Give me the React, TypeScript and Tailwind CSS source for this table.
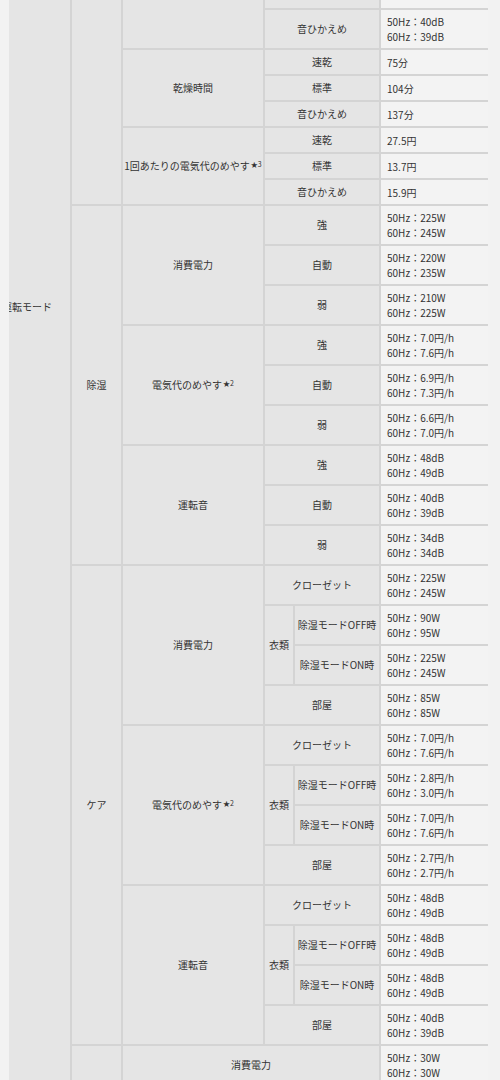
import React, { FC, ReactNode } from "react";
import clsx from "clsx";

const labelCls =
  "flex items-center justify-center bg-[#e5e5e5] text-center text-[10px] leading-[14px] text-[#333]";
const valueCls =
  "flex flex-col justify-center bg-[#f3f3f3] pl-[6px] text-[10px] leading-[15px] text-[#333]";

interface LeafRowProps {
  label?: string;
  lines?: string[];
  tall?: boolean;
  narrow?: boolean;
  partial?: boolean;
}

// one label + one value, the smallest row of the spec table
const LeafRow: FC<LeafRowProps> = ({ label, lines = [], tall, narrow, partial }) => {
  return (
    <div
      className={clsx(
        "flex gap-[2px]",
        partial ? "h-[8px]" : tall ? "h-[38px]" : "h-[24px]"
      )}
    >
      <div className={clsx(labelCls, narrow ? "w-[84px]" : "w-[114px]")}>{label}</div>
      <div className={clsx(valueCls, "w-[107px]")}>
        {lines.map((line) => (
          <span key={line}>{line}</span>
        ))}
      </div>
    </div>
  );
};

interface GroupProps {
  title?: ReactNode;
  width: "b" | "c" | "d";
  children: ReactNode;
}

const Group: FC<GroupProps> = ({ title, width, children }) => {
  return (
    <div className="flex gap-[2px]">
      <div
        className={clsx(
          labelCls,
          width === "b" && "w-[49px]",
          width === "c" && "w-[140px]",
          width === "d" && "w-[28px]"
        )}
      >
        {title}
      </div>
      <div className="flex flex-col gap-[2px]">{children}</div>
    </div>
  );
};

const Star: FC<{ n: string }> = ({ n }) => (
  <sup className="ml-[1px] text-[7px] leading-none">★{n}</sup>
);

const hz = (a: string, b: string) => [`50Hz：${a}`, `60Hz：${b}`];

interface CareProps {
  title: ReactNode;
  closet: string[];
  off: string[];
  on: string[];
  room: string[];
}

const CareBlock: FC<CareProps> = ({ title, closet, off, on, room }) => (
  <Group title={title} width="c">
    <LeafRow label="クローゼット" lines={closet} tall />
    <Group title="衣類" width="d">
      <LeafRow label="除湿モードOFF時" lines={off} tall narrow />
      <LeafRow label="除湿モードON時" lines={on} tall narrow />
    </Group>
    <LeafRow label="部屋" lines={room} tall />
  </Group>
);

const App: FC = () => {
  return (
    <div
      className="w-[500px] h-[1080px] overflow-hidden bg-[#f2f2f2] pl-[9px]"
      style={{ fontFamily: '"Noto Sans CJK JP", "Noto Sans", sans-serif' }}
    >
      <div className="flex w-[479px] gap-[2px] bg-[#d4d4d4]">
        {/* 運転モード column, scrolled partly out of view */}
        <div className="w-[61px] shrink-0 overflow-hidden bg-[#e5e5e5] pt-[300px]">
          <div className="ml-[-7px] whitespace-nowrap text-[10px] leading-[14px] text-[#333]">
            運転モード
          </div>
        </div>

        <div className="flex flex-col gap-[2px]">
          {/* 乾燥 */}
          <Group width="b">
            <Group width="c">
              <LeafRow partial />
              <LeafRow label="音ひかえめ" lines={hz("40dB", "39dB")} tall />
            </Group>
            <Group title="乾燥時間" width="c">
              <LeafRow label="速乾" lines={["75分"]} />
              <LeafRow label="標準" lines={["104分"]} />
              <LeafRow label="音ひかえめ" lines={["137分"]} />
            </Group>
            <Group
              title={
                <span>
                  1回あたりの電気代のめやす
                  <Star n="3" />
                </span>
              }
              width="c"
            >
              <LeafRow label="速乾" lines={["27.5円"]} />
              <LeafRow label="標準" lines={["13.7円"]} />
              <LeafRow label="音ひかえめ" lines={["15.9円"]} />
            </Group>
          </Group>

          {/* 除湿 */}
          <Group title="除湿" width="b">
            <Group title="消費電力" width="c">
              <LeafRow label="強" lines={hz("225W", "245W")} tall />
              <LeafRow label="自動" lines={hz("220W", "235W")} tall />
              <LeafRow label="弱" lines={hz("210W", "225W")} tall />
            </Group>
            <Group
              title={
                <span>
                  電気代のめやす
                  <Star n="2" />
                </span>
              }
              width="c"
            >
              <LeafRow label="強" lines={hz("7.0円/h", "7.6円/h")} tall />
              <LeafRow label="自動" lines={hz("6.9円/h", "7.3円/h")} tall />
              <LeafRow label="弱" lines={hz("6.6円/h", "7.0円/h")} tall />
            </Group>
            <Group title="運転音" width="c">
              <LeafRow label="強" lines={hz("48dB", "49dB")} tall />
              <LeafRow label="自動" lines={hz("40dB", "39dB")} tall />
              <LeafRow label="弱" lines={hz("34dB", "34dB")} tall />
            </Group>
          </Group>

          {/* ケア */}
          <Group title="ケア" width="b">
            <CareBlock
              title="消費電力"
              closet={hz("225W", "245W")}
              off={hz("90W", "95W")}
              on={hz("225W", "245W")}
              room={hz("85W", "85W")}
            />
            <CareBlock
              title={
                <span>
                  電気代のめやす
                  <Star n="2" />
                </span>
              }
              closet={hz("7.0円/h", "7.6円/h")}
              off={hz("2.8円/h", "3.0円/h")}
              on={hz("7.0円/h", "7.6円/h")}
              room={hz("2.7円/h", "2.7円/h")}
            />
            <CareBlock
              title="運転音"
              closet={hz("48dB", "49dB")}
              off={hz("48dB", "49dB")}
              on={hz("48dB", "49dB")}
              room={hz("40dB", "39dB")}
            />
          </Group>

          {/* next mode, cut off at the bottom */}
          <Group width="b">
            <div className="flex h-[38px] gap-[2px]">
              <div className={clsx(labelCls, "w-[256px]")}>消費電力</div>
              <div className={clsx(valueCls, "w-[107px]")}>
                {hz("30W", "30W").map((line) => (
                  <span key={line}>{line}</span>
                ))}
              </div>
            </div>
            <LeafRow label="" lines={[]} tall />
          </Group>
        </div>
      </div>
    </div>
  );
};

export default App;
